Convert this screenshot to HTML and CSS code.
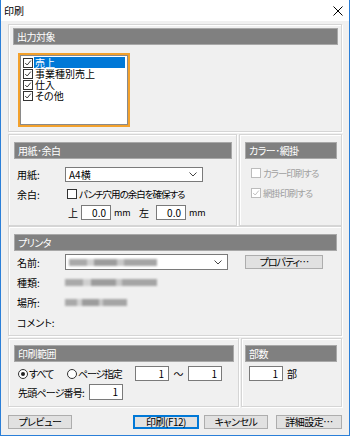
FILE: index.html
```html
<!DOCTYPE html>
<html lang="ja">
<head>
  <meta charset="UTF-8">
  <title>印刷</title>
  <link rel="stylesheet" href="styles.css">
</head>
<body>
  <div class="window">
    <div class="titlebar">
      <span class="title">印刷</span>
      <svg class="close" width="10" height="10" viewBox="0 0 10 10"><path d="M0.5 0.5L9.5 9.5M9.5 0.5L0.5 9.5" stroke="#000" stroke-width="1"/></svg>
    </div>

    <div class="content">
      <section class="panel target">
        <div class="head">出力対象</div>
        <div class="listbox">
          <div class="item selected"><span class="cb"><svg viewBox="0 0 10 10"><polyline points="1.5,5 4,7.5 8.5,2"/></svg></span><span class="txt">売上</span></div>
          <div class="item"><span class="cb"><svg viewBox="0 0 10 10"><polyline points="1.5,5 4,7.5 8.5,2"/></svg></span><span class="txt">事業種別売上</span></div>
          <div class="item"><span class="cb"><svg viewBox="0 0 10 10"><polyline points="1.5,5 4,7.5 8.5,2"/></svg></span><span class="txt">仕入</span></div>
          <div class="item"><span class="cb"><svg viewBox="0 0 10 10"><polyline points="1.5,5 4,7.5 8.5,2"/></svg></span><span class="txt">その他</span></div>
        </div>
      </section>

      <div class="pair">
        <section class="panel paper">
          <div class="head">用紙･余白</div>
          <div class="frow r1">
            <span class="lbl">用紙:</span>
            <div class="select paper-select"><span>A4横</span><svg class="chev" viewBox="0 0 8 5"><polyline points="0.5,0.5 4,4 7.5,0.5"/></svg></div>
          </div>
          <div class="frow r2">
            <span class="lbl">余白:</span>
            <span class="cb"></span><span class="cbtext">パンチ穴用の余白を確保する</span>
          </div>
          <div class="frow r3">
            <span class="lbl"></span>
            <span class="unit-l">上</span><span class="num mm-in">0.0</span><span class="mm">mm</span>
            <span class="unit-l left">左</span><span class="num mm-in">0.0</span><span class="mm">mm</span>
          </div>
        </section>

        <section class="panel color">
          <div class="head">カラー･網掛</div>
          <div class="frow c1"><span class="cb off"></span><span class="cbtext off">カラー印刷する</span></div>
          <div class="frow c2"><span class="cb off"><svg viewBox="0 0 10 10"><polyline points="1.5,5 4,7.5 8.5,2"/></svg></span><span class="cbtext off">網掛印刷する</span></div>
        </section>
      </div>

      <section class="panel printer">
        <div class="head">プリンタ</div>
        <div class="frow p1">
          <span class="lbl">名前:</span>
          <div class="select printer-select"><span class="blur b1"></span><svg class="chev" viewBox="0 0 8 5"><polyline points="0.5,0.5 4,4 7.5,0.5"/></svg></div>
          <button class="btn prop">プロパティ…</button>
        </div>
        <div class="frow p2"><span class="lbl">種類:</span><span class="blur b2"></span></div>
        <div class="frow p2"><span class="lbl">場所:</span><span class="blur b3"></span></div>
        <div class="frow p2"><span class="lbl">コメント:</span></div>
      </section>

      <div class="pair">
        <section class="panel range">
          <div class="head">印刷範囲</div>
          <div class="frow g1">
            <span class="radio on"></span><span class="rtext all">すべて</span>
            <span class="radio"></span><span class="rtext page">ページ指定</span>
            <span class="num pg">1</span><span class="tilde">～</span><span class="num pg">1</span>
          </div>
          <div class="frow g2">
            <span class="first-lbl">先頭ページ番号:</span><span class="num pg">1</span>
          </div>
        </section>

        <section class="panel copies">
          <div class="head">部数</div>
          <div class="frow g1"><span class="num pg">1</span><span class="busu">部</span></div>
        </section>
      </div>

      <div class="buttons">
        <button class="btn">プレビュー</button>
        <span class="spacer"></span>
        <button class="btn default">印刷(F12)</button>
        <button class="btn">キャンセル</button>
        <button class="btn wide">詳細設定…</button>
      </div>
    </div>
  </div>
</body>
</html>
```

FILE: styles.css
```css
body {
  margin: 0;
  font-family: "Noto Sans CJK JP", sans-serif;
  font-size: 10px;
  font-feature-settings: "palt";
  color: #000;
}

.window {
  width: 350px;
  height: 436px;
  box-sizing: border-box;
  border: 1px solid #2b7fd8;
  border-top: none;
  background: #f0f0f0;
}

.titlebar {
  height: 21px;
  background: #fff;
  display: flex;
  align-items: center;
  justify-content: space-between;
  padding: 0 6px 0 3px;
  font-size: 10px;
}
.close { margin-top: 1px; }

.content {
  padding: 3px 7px 0;
  display: flex;
  flex-direction: column;
}

.panel {
  box-sizing: border-box;
  border: 1px solid #d5d5d5;
  box-shadow: inset 1px 1px 0 #fff, 1px 1px 0 #fff;
  padding: 7px 5px 0 6px;
}
.head {
  height: 15px;
  line-height: 15px;
  background: #808080;
  color: #fff;
  padding-left: 3px;
  letter-spacing: -0.5px;
  box-shadow: 0 0 0 1px #a8a8a8;
}

.pair {
  display: flex;
  gap: 2px;
  margin-top: 2px;
}

/* 出力対象 */
.target {
  height: 108px;
  padding: 4px 4px 0 5px;
}
.listbox {
  box-sizing: border-box;
  width: 112px;
  height: 74px;
  margin: 9px 0 0 4px;
  border: 2px solid #f3a12c;
  box-shadow: inset 0 0 0 1px #8a8a8a;
  background: #fff;
  padding: 2px 3px 0 3px;
}
.item {
  display: flex;
  align-items: center;
  height: 11px;
  line-height: 11px;
}
.item .cb { margin-right: 1px; }
.item .txt {
  flex: 1;
  padding-left: 1px;
}
.item.selected .txt {
  background: #0078d7;
  color: #fff;
}

.cb {
  box-sizing: border-box;
  width: 10px;
  height: 10px;
  border: 1px solid #333;
  background: #fff;
  display: inline-block;
  flex: none;
}
.cb svg {
  display: block;
  width: 8px;
  height: 8px;
  fill: none;
  stroke: #333;
  stroke-width: 1.2;
}
.cb.off { border-color: #bcbcbc; }
.cb.off svg { stroke: #bcbcbc; }

/* 用紙・余白 */
.paper { width: 229px; height: 92px; padding-top: 8px; }
.color { width: 103px; height: 92px; padding-top: 8px; }

.frow {
  display: flex;
  align-items: center;
  padding-left: 2px;
  white-space: nowrap;
}
.frow > * { flex: none; }
.lbl { width: 48px; }

.select {
  box-sizing: border-box;
  height: 15px;
  background: #fff;
  border: 1px solid #7a7a7a;
  display: flex;
  align-items: center;
  justify-content: space-between;
  padding: 0 5px 0 3px;
}
.chev {
  width: 8px;
  height: 5px;
  fill: none;
  stroke: #444;
  stroke-width: 1;
}
.paper-select { width: 138px; }
.r1 { margin-top: 9px; height: 15px; }
.r2 { margin-top: 5px; height: 14px; }
.r2 .cb { margin-left: 2px; }
.cbtext { margin-left: 2px; font-size: 9.5px; letter-spacing: -1px; }
.cbtext.off { color: #a0a0a0; }
.r3 { margin-top: 4px; height: 15px; }
.unit-l { margin-left: 3px; width: 13px; }
.unit-l.left { margin-left: 10px; width: 17px; }
.mm { margin-left: 3px; width: 15px; font-size: 9px; }

.num {
  box-sizing: border-box;
  height: 15px;
  background: #fff;
  border: 1px solid #7a7a7a;
  text-align: right;
  padding-right: 4px;
  line-height: 13px;
}
.mm-in { width: 30px; }

.color .frow { padding-left: 5px; }
.c1 { margin-top: 9px; height: 12px; }
.c2 { margin-top: 8px; height: 12px; }

/* プリンタ */
.printer { height: 110px; padding-top: 8px; }
.p1 { margin-top: 4px; height: 16px; }
.p2 { margin-top: 4px; height: 16px; }
.printer-select { width: 163px; height: 16px; }

.blur {
  display: inline-block;
  height: 7px;
  background: linear-gradient(90deg, #a9a9a9 0 20%, #d0d0d0 20% 28%, #9c9c9c 28% 55%, #c8c8c8 55% 62%, #a5a5a5 62% 100%);
  filter: blur(1px);
}
.b1 { width: 88px; }
.b2 { width: 92px; }
.b3 { width: 62px; }

/* 印刷範囲・部数 */
.range { width: 231px; height: 69px; padding-top: 7px; }
.copies { width: 101px; height: 69px; padding-top: 7px; padding-left: 4px; }
.range .frow { padding-left: 3px; }
.g1 { margin-top: 5px; height: 15px; }
.g2 { margin-top: 3px; height: 16px; }

.radio {
  box-sizing: border-box;
  width: 10px;
  height: 10px;
  border: 1px solid #333;
  border-radius: 50%;
  background: #fff;
  position: relative;
}
.radio.on::after {
  content: "";
  position: absolute;
  left: 2px;
  top: 2px;
  width: 4px;
  height: 4px;
  border-radius: 50%;
  background: #222;
}
.rtext { margin-left: 1px; letter-spacing: -1px; }
.rtext.all { width: 38px; }
.rtext.page { width: 57px; letter-spacing: -1.2px; }
.pg { width: 34px; }
.tilde { width: 19px; text-align: center; }
.first-lbl { width: 71px; letter-spacing: -0.8px; }
.g2 .pg { height: 16px; }
.copies .frow { padding-left: 3px; }
.busu { margin-left: 4px; }

/* ボタン */
.buttons {
  display: flex;
  margin-top: 8px;
  gap: 5px;
}
.spacer { flex: 1; }
.btn {
  box-sizing: border-box;
  height: 14px;
  width: 64px;
  padding: 0;
  font: inherit;
  font-size: 10px;
  line-height: 12px;
  letter-spacing: -0.5px;
  background: #e1e1e1;
  border: 1px solid #adadad;
  color: #000;
  white-space: nowrap;
}
.btn.prop { margin-left: 17px; width: 78px; letter-spacing: -1px; }
.btn.default {
  border: 1px solid #0078d7;
  box-shadow: inset 0 0 0 1px #0078d7;
  width: 66px;
}
.btn.wide { width: 66px; margin-left: 3px; }
```
